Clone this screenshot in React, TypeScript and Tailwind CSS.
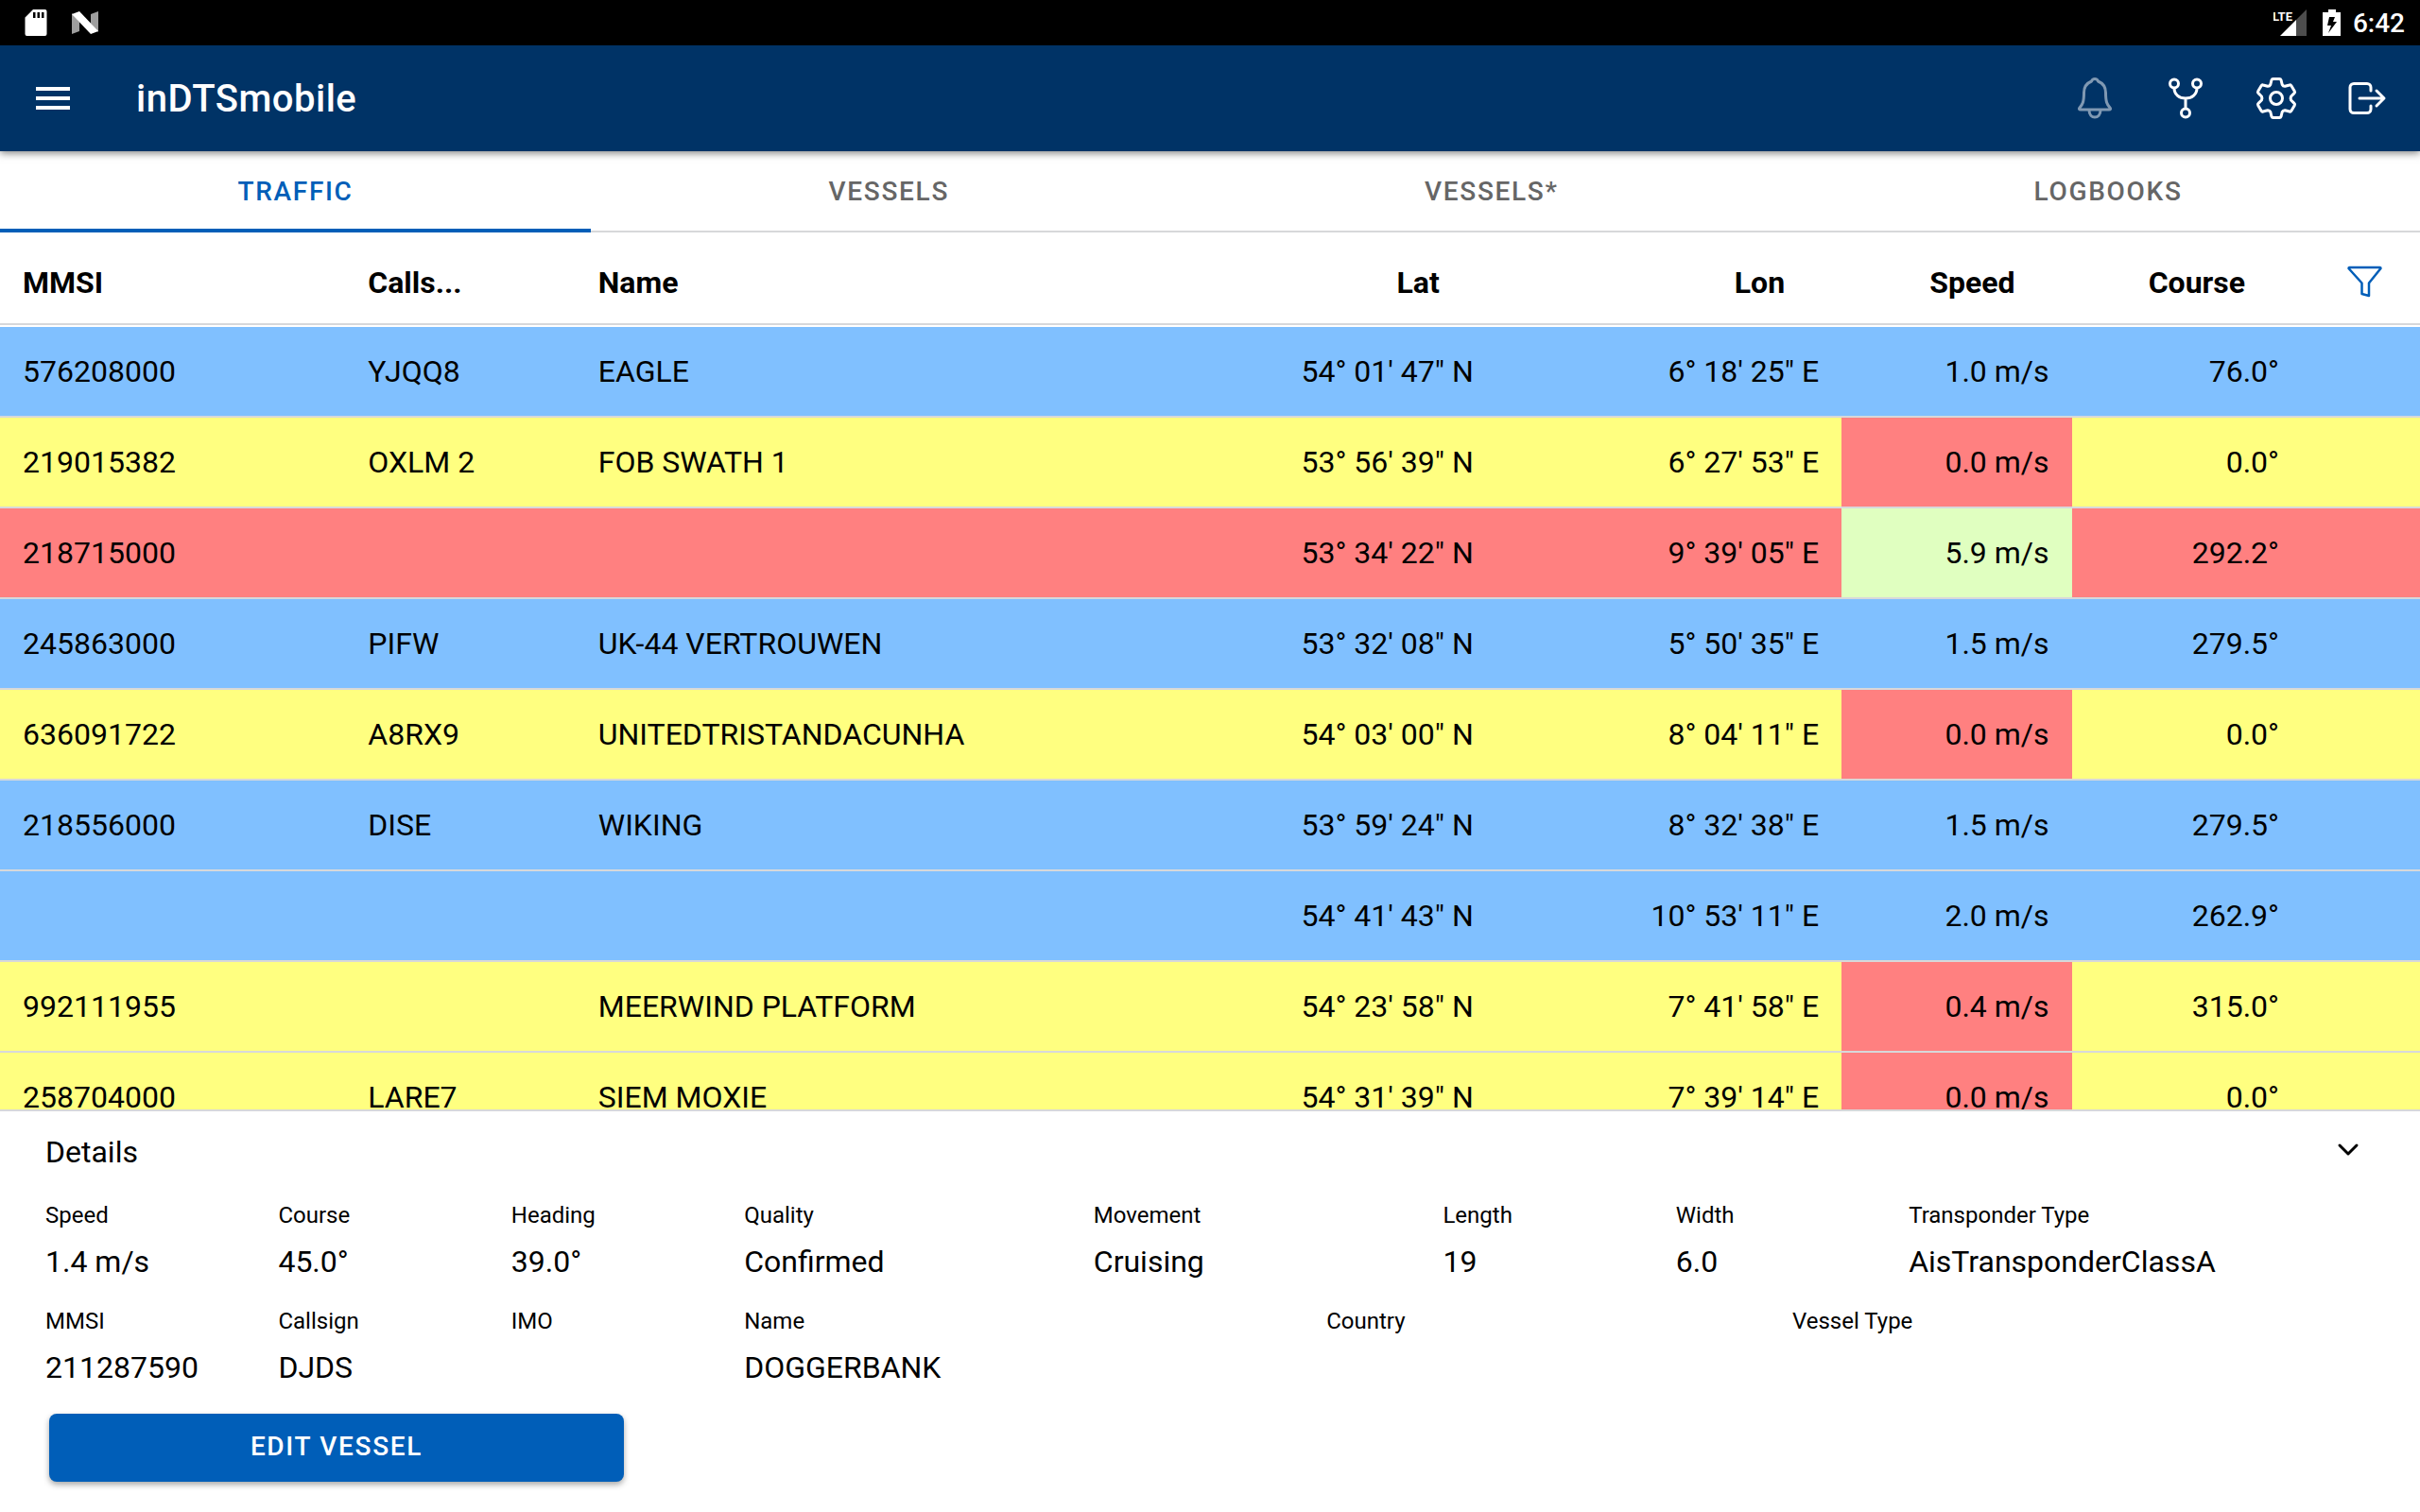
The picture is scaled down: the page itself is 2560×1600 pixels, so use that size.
import { useState } from 'react';

const tabs = ['TRAFFIC', 'VESSELS', 'VESSELS*', 'LOGBOOKS'];

const traffic = [
  { mmsi: '576208000', callsign: 'YJQQ8', name: 'EAGLE', lat: `54° 01' 47" N`, lon: `6° 18' 25" E`, speed: '1.0 m/s', course: '76.0°', color: 'bg-[#80c0ff]', speedColor: '' },
  { mmsi: '219015382', callsign: 'OXLM 2', name: 'FOB SWATH 1', lat: `53° 56' 39" N`, lon: `6° 27' 53" E`, speed: '0.0 m/s', course: '0.0°', color: 'bg-[#ffff80]', speedColor: 'bg-[#ff8080]' },
  { mmsi: '218715000', callsign: '', name: '', lat: `53° 34' 22" N`, lon: `9° 39' 05" E`, speed: '5.9 m/s', course: '292.2°', color: 'bg-[#ff8080]', speedColor: 'bg-[#e0ffc0]' },
  { mmsi: '245863000', callsign: 'PIFW', name: 'UK-44 VERTROUWEN', lat: `53° 32' 08" N`, lon: `5° 50' 35" E`, speed: '1.5 m/s', course: '279.5°', color: 'bg-[#80c0ff]', speedColor: '' },
  { mmsi: '636091722', callsign: 'A8RX9', name: 'UNITEDTRISTANDACUNHA', lat: `54° 03' 00" N`, lon: `8° 04' 11" E`, speed: '0.0 m/s', course: '0.0°', color: 'bg-[#ffff80]', speedColor: 'bg-[#ff8080]' },
  { mmsi: '218556000', callsign: 'DISE', name: 'WIKING', lat: `53° 59' 24" N`, lon: `8° 32' 38" E`, speed: '1.5 m/s', course: '279.5°', color: 'bg-[#80c0ff]', speedColor: '' },
  { mmsi: '', callsign: '', name: '', lat: `54° 41' 43" N`, lon: `10° 53' 11" E`, speed: '2.0 m/s', course: '262.9°', color: 'bg-[#80c0ff]', speedColor: '' },
  { mmsi: '992111955', callsign: '', name: 'MEERWIND PLATFORM', lat: `54° 23' 58" N`, lon: `7° 41' 58" E`, speed: '0.4 m/s', course: '315.0°', color: 'bg-[#ffff80]', speedColor: 'bg-[#ff8080]' },
  { mmsi: '258704000', callsign: 'LARE7', name: 'SIEM MOXIE', lat: `54° 31' 39" N`, lon: `7° 39' 14" E`, speed: '0.0 m/s', course: '0.0°', color: 'bg-[#ffff80]', speedColor: 'bg-[#ff8080]' },
];

const details = [
  { label: 'Speed', value: '1.4 m/s', span: 'col-span-2' },
  { label: 'Course', value: '45.0°', span: 'col-span-2' },
  { label: 'Heading', value: '39.0°', span: 'col-span-2' },
  { label: 'Quality', value: 'Confirmed', span: 'col-span-3' },
  { label: 'Movement', value: 'Cruising', span: 'col-span-3' },
  { label: 'Length', value: '19', span: 'col-span-2' },
  { label: 'Width', value: '6.0', span: 'col-span-2' },
  { label: 'Transponder Type', value: 'AisTransponderClassA', span: 'col-span-4' },
  { label: 'MMSI', value: '211287590', span: 'col-span-2' },
  { label: 'Callsign', value: 'DJDS', span: 'col-span-2' },
  { label: 'IMO', value: '', span: 'col-span-2' },
  { label: 'Name', value: 'DOGGERBANK', span: 'col-span-5' },
  { label: 'Country', value: '', span: 'col-span-4' },
  { label: 'Vessel Type', value: '', span: 'col-span-5' },
];

function StatusBar() {
  return (
    <div className="flex h-12 shrink-0 items-center justify-between bg-black pl-6 pr-4 text-white">
      <div className="flex items-center gap-6">
        <svg className="h-7 w-7" viewBox="0 0 28 28">
          <path fill="#fff" fillRule="evenodd" d="M11 0h12.500a2 2 0 0 1 2 2v24a2 2 0 0 1-2 2H4.500a2 2 0 0 1-2-2V8.500zM11 3v6h2.500V3zm4.500 0v6H18V3zm4.500 0v6h2.500V3z" />
        </svg>
        <svg className="h-7 w-7" viewBox="0 0 28 28">
          <path fill="#9e9e9e" d="M0 4l8 9v10l-8 3zM20 5l8-3v22l-8-9z" />
          <path fill="#fff" d="M0 5l8-3 20 21-8 3z" />
        </svg>
      </div>
      <div className="flex items-center">
        <svg className="h-8 w-9" viewBox="0 0 36 32">
          <path fill="#4d4d4d" d="M35 2v28H24V13z" />
          <path fill="#fff" d="M24 13v17H7z" />
          <text x="-1" y="14" fill="#fff" fontFamily="Roboto, sans-serif" fontSize="13" fontWeight="700">LTE</text>
        </svg>
        <svg className="ml-4 h-7 w-5" viewBox="0 0 20 28">
          <path fill="#fff" fillRule="evenodd" d="M6 0h8v3h5v25H0V3h6zM7 8L5 17h4L6 25l9-12h-4l2-5z" />
        </svg>
        <span className="ml-3 pt-0.5 text-[28px] font-medium leading-8">6:42</span>
      </div>
    </div>
  );
}

function TopBar() {
  return (
    <header className="z-10 flex h-28 shrink-0 items-center bg-[#003366] px-8 text-white shadow-[0_2px_8px_rgba(0,0,0,0.5)]">
      <button aria-label="Menu">
        <svg className="h-12 w-12" viewBox="0 0 48 48" fill="#fff">
          <path d="M6 12h36v4H6zM6 22h36v4H6zM6 32h36v4H6z" />
        </svg>
      </button>
      <h1 className="ml-16 pt-0.5 text-[40px] font-medium leading-12 tracking-[0.0125em]">inDTSmobile</h1>
      <div className="ml-auto flex items-center gap-12">
        <button aria-label="Notifications" disabled className="opacity-50">
          <svg className="h-12 w-12" viewBox="0 0 48 48" fill="none" stroke="#fff" strokeWidth="3" strokeLinecap="round" strokeLinejoin="round">
            <path d="M24 3.500c-2 0-3 1-3.500 2.500C14.500 8.500 12.500 13 12.500 18c0 10-1.500 12.500-4.500 16-1 1.300-.5 2 1 2h30c1.500 0 2-.7 1-2C37 30.500 35.500 28 35.500 18c0-5-2-9.500-8-12C27 4.500 26 3.500 24 3.500z" />
            <path d="M18 36.500c0 10 12 10 12 0" />
          </svg>
        </button>
        <button aria-label="Connections">
          <svg className="h-12 w-12" viewBox="0 0 48 48" fill="none" stroke="#fff" strokeWidth="3">
            <circle cx="12" cy="8.500" r="4.500" />
            <circle cx="36" cy="8.500" r="4.500" />
            <circle cx="24" cy="39.500" r="4.500" />
            <path d="M12 13c0 7 5 11 12 11s12-4 12-11M24 24v11" />
          </svg>
        </button>
        <button aria-label="Settings">
          <svg className="h-12 w-12" viewBox="0 0 48 48" fill="none" stroke="#fff" strokeWidth="3" strokeLinejoin="round">
            <circle cx="24" cy="24" r="6.500" />
            <path d="M17.800 9.500L19 4.700Q19.400 3.500 20.600 3.500H27.400Q28.600 3.500 29 4.700L30.200 9.500Q31.200 11.500 33.200 11.300L38 10Q39.200 9.600 39.900 10.700L43.300 16.500Q44 17.700 43 18.600L39.600 22Q38.600 24 39.600 26L43 29.400Q44 30.300 43.300 31.500L39.900 37.300Q39.200 38.400 38 38L33.200 36.700Q31.200 36.500 30.200 38.500L29 43.300Q28.600 44.500 27.400 44.500H20.600Q19.400 44.500 19 43.300L17.800 38.500Q16.800 36.500 14.800 36.700L10 38Q8.800 38.400 8.100 37.300L4.700 31.500Q4 30.300 5 29.400L8.400 26Q9.400 24 8.400 22L5 18.600Q4 17.700 4.700 16.500L8.100 10.700Q8.800 9.600 10 10L14.800 11.300Q16.800 11.500 17.800 9.500z" />
          </svg>
        </button>
        <button aria-label="Log out">
          <svg className="h-12 w-12" viewBox="0 0 48 48" fill="none" stroke="#fff" strokeWidth="3" strokeLinecap="round" strokeLinejoin="round">
            <path d="M28 16v-3.500a4 4 0 0 0-4-4H10a4 4 0 0 0-4 4v23a4 4 0 0 0 4 4h14a4 4 0 0 0 4-4V32M34 16l8 8-8 8M16 24h25" />
          </svg>
        </button>
      </div>
    </header>
  );
}

function TrafficTable() {
  return (
    <div className="min-h-0 flex-1 overflow-hidden">
      <table className="w-full table-fixed border-separate border-spacing-0 text-[32px] leading-10">
        <colgroup>
          <col className="w-[14.27%]" />
          <col className="w-[9.51%]" />
          <col className="w-[23.78%]" />
          <col className="w-[14.27%]" />
          <col className="w-[14.27%]" />
          <col className="w-[9.51%]" />
          <col className="w-[9.51%]" />
          <col />
        </colgroup>
        <thead>
          <tr className="h-[98px] *:border-b-2 *:border-[#d7d8da] *:pt-2.5 *:font-bold">
            <th className="px-6 text-left">MMSI</th>
            <th className="px-6 text-left">Calls...</th>
            <th className="px-6 text-left">Name</th>
            <th className="pr-15 text-right">Lat</th>
            <th className="pr-15 text-right">Lon</th>
            <th className="pr-15 text-right">Speed</th>
            <th className="pr-15 text-right">Course</th>
            <th className="pl-12">
              <button aria-label="Filter" className="block">
                <svg className="h-10 w-10" viewBox="0 0 40 40" fill="none" stroke="#005eb8" strokeWidth="2.500" strokeLinejoin="round">
                  <path d="M1.500 5Q1.500 4 2.500 4h32Q35.500 4 35.500 5L23 20.500V34l-7.500-2V20.500z" />
                </svg>
              </button>
            </th>
          </tr>
        </thead>
        <tbody>
          {traffic.map((row, index) => (
            <tr key={index} className={`h-24 first:h-[98px] *:border-b-2 *:border-[#d7d8da] first:*:border-t-2 first:*:border-t-white ${row.color}`}>
              <td className="px-6">{row.mmsi}</td>
              <td className="px-6">{row.callsign}</td>
              <td className="px-6">{row.name}</td>
              <td className="px-6 text-right">{row.lat}</td>
              <td className="px-6 text-right">{row.lon}</td>
              <td className={`px-6 text-right ${row.speedColor}`}>{row.speed}</td>
              <td className="px-6 text-right">{row.course}</td>
              <td></td>
            </tr>
          ))}
        </tbody>
      </table>
    </div>
  );
}

function DetailsPanel() {
  return (
    <section className="shrink-0 border-t-2 border-[#d7d8da] bg-white px-12 pb-8">
      <div className="mb-1 flex h-[86px] items-center justify-between">
        <h2 className="text-[32px] leading-10">Details</h2>
        <button aria-label="Collapse details" className="mr-3 pb-1">
          <svg className="h-8 w-8" viewBox="0 0 32 32" fill="none" stroke="#000" strokeWidth="3" strokeLinecap="round" strokeLinejoin="round">
            <path d="M7 11l9 9 9-9" />
          </svg>
        </button>
      </div>
      <dl className="grid grid-cols-20 gap-y-[18px]">
        {details.map((item) => (
          <div key={item.label} className={item.span}>
            <dt className="text-2xl leading-10">{item.label}</dt>
            <dd className="mt-1 h-[50px] text-[32px] leading-[50px]">{item.value}</dd>
          </div>
        ))}
      </dl>
      <div className="mt-6 grid grid-cols-4">
        <button className="mx-1 h-18 rounded-lg bg-[#005eb8] pb-0.5 text-[28px] font-medium tracking-[0.06em] text-white shadow-[0_3px_6px_rgba(0,0,0,0.35)]">
          EDIT VESSEL
        </button>
      </div>
    </section>
  );
}

export default function App() {
  const [active, setActive] = useState('TRAFFIC');

  return (
    <div className="flex h-screen flex-col overflow-hidden bg-white font-[Roboto,sans-serif] text-black">
      <StatusBar />
      <TopBar />
      <nav className="flex h-[86px] shrink-0 border-b-2 border-[#d7d8da]">
        {tabs.map((tab) => (
          <button
            key={tab}
            onClick={() => setActive(tab)}
            className={`-mb-0.5 flex-auto border-b-4 pt-1 text-[28px] font-medium tracking-[0.06em] ${active === tab ? 'border-[#005eb8] text-[#005eb8]' : 'border-transparent text-[#666666]'}`}
          >
            {tab}
          </button>
        ))}
      </nav>
      <TrafficTable />
      <DetailsPanel />
    </div>
  );
}
